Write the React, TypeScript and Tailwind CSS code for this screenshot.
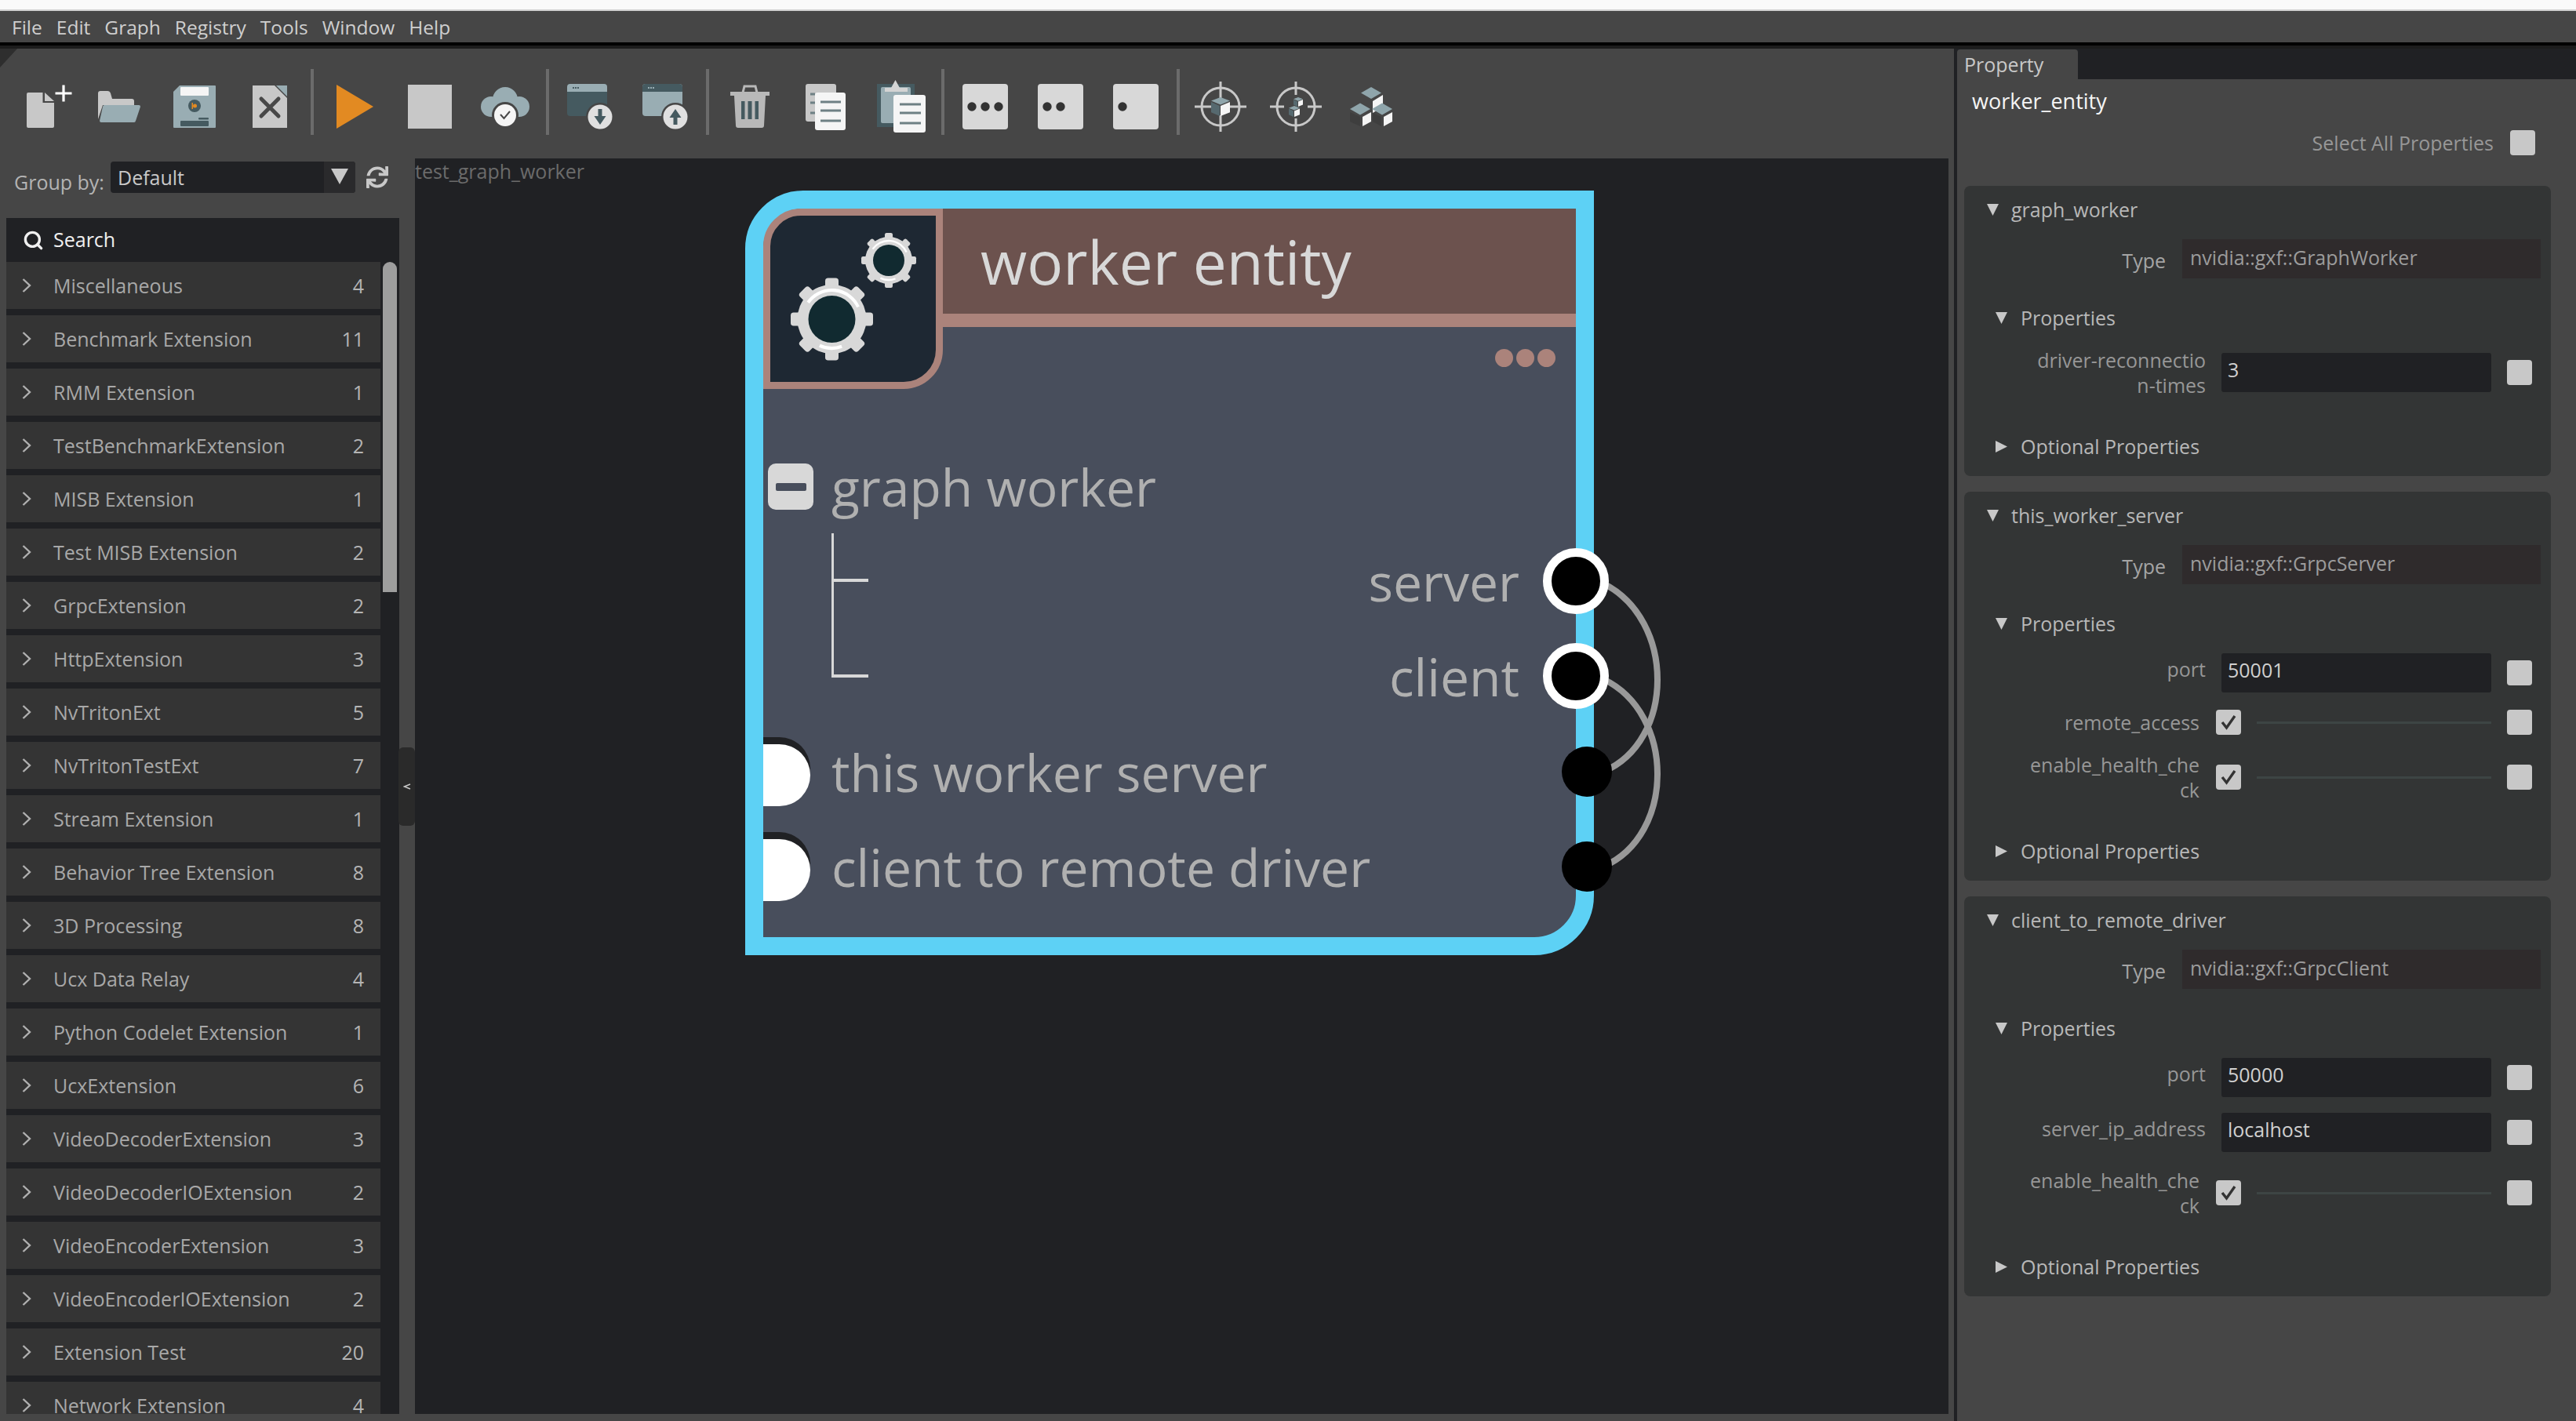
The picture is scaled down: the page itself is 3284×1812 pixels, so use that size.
import { Search } from 'lucide-react';
import { FaSync } from 'react-icons/fa';
import type { ReactNode } from 'react';

const groups: [string, number][] = [
  ['Miscellaneous', 4],
  ['Benchmark Extension', 11],
  ['RMM Extension', 1],
  ['TestBenchmarkExtension', 2],
  ['MISB Extension', 1],
  ['Test MISB Extension', 2],
  ['GrpcExtension', 2],
  ['HttpExtension', 3],
  ['NvTritonExt', 5],
  ['NvTritonTestExt', 7],
  ['Stream Extension', 1],
  ['Behavior Tree Extension', 8],
  ['3D Processing', 8],
  ['Ucx Data Relay', 4],
  ['Python Codelet Extension', 1],
  ['UcxExtension', 6],
  ['VideoDecoderExtension', 3],
  ['VideoDecoderIOExtension', 2],
  ['VideoEncoderExtension', 3],
  ['VideoEncoderIOExtension', 2],
  ['Extension Test', 20],
  ['Network Extension', 4],
];

const menu = ['File', 'Edit', 'Graph', 'Registry', 'Tools', 'Window', 'Help'];

// toolbar icons are drawn in page coordinates, the viewBox picks the 96px cell
function Tool({ x, children }: { x: number; children: ReactNode }) {
  return (
    <svg viewBox={`${x} 88 96 96`} className="w-24 h-24 shrink-0 overflow-visible">
      {children}
    </svg>
  );
}

function Sep() {
  return (
    <div className="w-3 h-[84px] shrink-0 flex justify-center">
      <div className="w-1 h-full bg-[#6b6b6b]" />
    </div>
  );
}

function Cube({ cx, cy, s }: { cx: number; cy: number; s: number }) {
  return (
    <g>
      <polygon
        points={`${cx},${cy - s} ${cx + s},${cy - s * 0.62} ${cx},${cy - s * 0.2} ${cx - s},${cy - s * 0.62}`}
        fill="#8fa5ab"
      />
      <polygon
        points={`${cx - s},${cy - s * 0.5} ${cx - 1},${cy - s * 0.08} ${cx - 1},${cy + s} ${cx - s},${cy + s * 0.6}`}
        fill="#56696f"
      />
      <polygon
        points={`${cx + s},${cy - s * 0.5} ${cx},${cy - s * 0.08} ${cx},${cy + s} ${cx + s},${cy + s * 0.6}`}
        fill="#f5f5f5"
      />
    </g>
  );
}

function Target({ cx, gap, children }: { cx: number; gap: number; children: ReactNode }) {
  const cy = 136;
  return (
    <g stroke="#c8c8c8" strokeWidth="3" fill="none">
      <circle cx={cx} cy={cy} r="24" />
      <path d={`M${cx - 33} ${cy}H${cx - gap} M${cx + gap} ${cy}H${cx + 33} M${cx} ${cy - 32}V${cy - gap} M${cx} ${cy + gap}V${cy + 32}`} />
      <g stroke="none">{children}</g>
    </g>
  );
}

function Toolbar() {
  return (
    <div className="h-[140px] shrink-0 flex pl-2 pt-[26px] items-start">
      <Tool x={8}>
        <path d="M36 118H54.5V131H69V161q0 2-2 2H36q-2 0-2-2V120q0-2 2-2Z" fill="#c8c8c8" />
        <polygon points="57,118 69,129 57,129" fill="#c8c8c8" />
        <path d="M70.5 119H91.5M81 108.5V129.5" stroke="#fff" strokeWidth="3.2" />
      </Tool>
      <Tool x={104}>
        <path d="M125 152V119q0-3 3-3h9q3 0 4 3l2 7h25q3 0 3 3v5H131Z" fill="#c8c8c8" />
        <path d="M133 134H177q2 0 2 2l-6 18q-.5 2-2 2H129q-2 0-2-2l4-18q.5-2 2-2Z" fill="#99adb3" />
      </Tool>
      <Tool x={200}>
        <path d="M229 109H274q1 0 1 1V162q0 1-1 1H222q-1 0-1-1V117Z" fill="#99adb3" />
        <rect x="230" y="111" width="36" height="11" rx="1" fill="#f5f5f5" />
        <circle cx="248" cy="135" r="8" fill="#455a60" />
        <circle cx="248.5" cy="135" r="2.5" fill="#e28a22" />
        <rect x="244.5" y="131" width="1.5" height="8" fill="#e28a22" />
        <rect x="253" y="150" width="13" height="2.5" rx="1" fill="#455a60" />
        <rect x="230" y="154" width="36" height="7" rx="1" fill="#455a60" />
      </Tool>
      <Tool x={296}>
        <path d="M322 109H350L366 125V163H322Z" fill="#c8c8c8" />
        <polygon points="352,109 366,109 366,123" fill="#99adb3" />
        <path d="M333 126L355 148M355 126L333 148" stroke="#484848" strokeWidth="5" strokeLinecap="round" />
      </Tool>
      <Sep />
      <Tool x={404}>
        <polygon points="429,108 476,136 429,164" fill="#e28a22" />
      </Tool>
      <Tool x={500}>
        <rect x="520" y="108" width="56" height="56" fill="#c8c8c8" />
      </Tool>
      <Tool x={596}>
        <circle cx="644" cy="127" r="16" fill="#99adb3" />
        <circle cx="626" cy="136" r="13" fill="#99adb3" />
        <circle cx="662" cy="136" r="13" fill="#99adb3" />
        <rect x="626" y="130" width="36" height="19" fill="#99adb3" />
        <circle cx="644" cy="147" r="17" fill="#464646" />
        <circle cx="644" cy="147" r="14" fill="#f5f5f5" />
        <path d="M638 146L642.5 151L650 142" stroke="#484848" strokeWidth="2" fill="none" />
      </Tool>
      <Sep />
      <Tool x={704}>
        <rect x="723" y="107" width="51" height="41" rx="4" fill="#455a60" />
        <path d="M723 117V111q0-4 4-4h43q4 0 4 4v6Z" fill="#99adb3" />
        <path d="M730 112h8" stroke="#455a60" strokeWidth="2" strokeDasharray="2 1" />
        <circle cx="765" cy="149" r="18" fill="#464646" />
        <circle cx="765" cy="149" r="15.5" fill="#e0e0e0" />
        <path d="M762.5 139h5v9h5L765 159l-7.5-11h5Z" fill="#455a60" />
      </Tool>
      <Tool x={800}>
        <rect x="819" y="107" width="51" height="41" rx="4" fill="#99adb3" />
        <path d="M819 117V111q0-4 4-4h43q4 0 4 4v6Z" fill="#455a60" />
        <path d="M826 112h8" stroke="#99adb3" strokeWidth="2" strokeDasharray="2 1" />
        <circle cx="861" cy="149" r="18" fill="#464646" />
        <circle cx="861" cy="149" r="15.5" fill="#e0e0e0" />
        <path d="M858.5 159h5v-9h5L861 139l-7.5 11h5Z" fill="#455a60" />
      </Tool>
      <Sep />
      <Tool x={908}>
        <path d="M936 122H976L974 160q0 3-3 3H941q-3 0-3-3Z" fill="#b8b8b8" />
        <path d="M931 117H981V122H931Z" fill="#b8b8b8" />
        <path d="M947 118L949 110H963L965 118" stroke="#b8b8b8" strokeWidth="3" fill="none" />
        <rect x="945" y="129" width="4.5" height="23" fill="#455a60" />
        <rect x="953.5" y="129" width="5" height="23" fill="#455a60" />
        <rect x="962.5" y="129" width="4.5" height="23" fill="#455a60" />
      </Tool>
      <Tool x={1004}>
        <rect x="1027" y="107" width="39" height="48" rx="3" fill="#c8c8c8" />
        <path d="M1033 120h6M1033 131h6M1033 144h6" stroke="#6e8084" strokeWidth="3" />
        <rect x="1039" y="118" width="39" height="48" rx="3" fill="#f5f5f5" />
        <path d="M1046 130h26M1046 141h26M1046 154h26" stroke="#6e8084" strokeWidth="3" />
      </Tool>
      <Tool x={1100}>
        <rect x="1118" y="107" width="48" height="55" fill="#455a60" />
        <rect x="1123" y="111" width="38" height="46" rx="2" fill="#99adb3" />
        <path d="M1128 117V112H1136L1141.5 102L1147 112H1157V117Z" fill="#d4d4d4" />
        <rect x="1139" y="121" width="41" height="48" rx="3" fill="#f5f5f5" />
        <path d="M1147 133h27M1147 144h27M1147 157h27" stroke="#6e8084" strokeWidth="3" />
      </Tool>
      <Sep />
      <Tool x={1208}>
        <rect x="1227" y="107" width="58" height="58" rx="4" fill="#d8d8d8" />
        <circle cx="1239" cy="136" r="5.7" fill="#333" />
        <circle cx="1256" cy="136" r="5.7" fill="#333" />
        <circle cx="1273" cy="136" r="5.7" fill="#333" />
      </Tool>
      <Tool x={1304}>
        <rect x="1323" y="107" width="58" height="58" rx="4" fill="#d8d8d8" />
        <circle cx="1335" cy="136" r="5.7" fill="#333" />
        <circle cx="1352" cy="136" r="5.7" fill="#333" />
      </Tool>
      <Tool x={1400}>
        <rect x="1419" y="107" width="58" height="58" rx="4" fill="#d8d8d8" />
        <circle cx="1431" cy="136" r="5.7" fill="#333" />
      </Tool>
      <Sep />
      <Tool x={1508}>
        <Target cx={1556} gap={11}>
          <Cube cx={1556} cy={136} s={12} />
        </Target>
      </Tool>
      <Tool x={1604}>
        <Target cx={1652} gap={15}>
          <Cube cx={1655} cy={130} s={6} />
          <Cube cx={1650} cy={142} s={7} />
        </Target>
      </Tool>
      <Tool x={1700}>
        <polygon points="1748,111 1761,118.5 1748,126 1735,118.5" fill="#8fa5ab" />
        <polygon points="1763,121 1750,129 1750,144 1763,136" fill="#f5f5f5" />
        <polygon points="1734,131.5 1747,139 1734,146.5 1721,139" fill="#8fa5ab" />
        <polygon points="1762,131.5 1775,139 1762,146.5 1749,139" fill="#8fa5ab" />
        <polygon points="1748,143 1737,149 1737,161 1748,155" fill="#f5f5f5" />
        <polygon points="1775,143 1764,149 1764,161 1775,155" fill="#f5f5f5" />
        <polygon points="1734,149 1721,143 1721,155 1734,161" fill="#3e3e3e" />
        <polygon points="1761,149 1750,144 1750,155 1761,161" fill="#3e3e3e" />
      </Tool>
    </div>
  );
}

function GroupList() {
  return (
    <div className="w-[529px] shrink-0 flex flex-col relative">
      <div className="h-[76px] shrink-0 pl-[18px] flex items-start">
        <div className="text-[25px] leading-[32px] text-[#b4b4b4] mt-[14px] w-[123px]">Group by:</div>
        <div className="w-[312px] h-10 mt-1 rounded-[4px] bg-[#202124] flex items-center">
          <div className="flex-1 pl-[9px] text-[25px] leading-[32px] text-[#c8c8c8]">Default</div>
          <div className="w-10 h-10 bg-[#2a2a2c] rounded-r-[4px] flex items-center justify-center">
            <svg width="22" height="20" viewBox="0 0 22 20" className="-mt-[2px]">
              <polygon points="0,0 22,0 11,20" fill="#c8c8c8" />
            </svg>
          </div>
        </div>
        <FaSync className="ml-[14px] mt-[10px] text-[28px] text-[#c8c8c8]" />
      </div>
      <div className="ml-2 w-[501px] h-14 shrink-0 bg-[#202124] flex items-center pl-[21px]">
        <Search size={27} strokeWidth={3} className="text-[#f0f0f0]" />
        <span className="ml-[12px] text-[25px] leading-[32px] text-[#f0f0f0] -mt-[2px]">Search</span>
      </div>
      <div className="ml-2 w-[501px] flex-1 min-h-0 bg-[#202124] overflow-hidden relative">
        {groups.map(([name, count]) => (
          <div
            key={name}
            className="w-[477px] h-[60px] mb-2 bg-[#343434] flex items-center text-[25px] text-[#a8a8a8]"
          >
            <svg width="12" height="20" viewBox="0 0 12 20" className="ml-[20px] shrink-0">
              <path d="M1.5 2L10 10L1.5 18" stroke="#b0b0b0" strokeWidth="2.4" fill="none" />
            </svg>
            <span className="ml-[28px] flex-1 pt-px">{name}</span>
            <span className="mr-[21px] pt-px text-[#b4b4b4]">{count}</span>
          </div>
        ))}
        <div className="absolute left-[480px] top-0 w-[18px] h-[421px] rounded-t-[9px] bg-[#9e9e9e]" />
      </div>
      <div className="absolute left-[508px] top-[751px] w-[21px] h-[100px] rounded-[6px] bg-[#2a2a2a] flex items-center justify-center">
        <svg width="10" height="8" viewBox="0 0 10 8">
          <path d="M9 1L1.5 4L9 7" stroke="#c8c8c8" strokeWidth="1.4" fill="none" />
        </svg>
      </div>
    </div>
  );
}

function Gear({ cx, cy, r, hole, tooth }: { cx: number; cy: number; r: number; hole: number; tooth: number }) {
  const angles = [0, 45, 90, 135, 180, 225, 270, 315];
  const mid = (r + hole) / 2;
  const arc = (a: number, b: number) => {
    const p = (d: number) => {
      const t = (d * Math.PI) / 180;
      return `${cx + mid * Math.cos(t)} ${cy + mid * Math.sin(t)}`;
    };
    return `M${p(a)}A${mid} ${mid} 0 0 1 ${p(b)}`;
  };
  return (
    <g>
      {angles.map((a) => (
        <rect
          key={a}
          x={cx - tooth / 2}
          y={cy - r - tooth * 0.5}
          width={tooth}
          height={tooth}
          rx={tooth * 0.22}
          fill="#d8d8d8"
          transform={`rotate(${a} ${cx} ${cy})`}
        />
      ))}
      <circle cx={cx} cy={cy} r={r} fill="#d8d8d8" />
      <circle cx={cx} cy={cy} r={hole} fill="#112a30" />
      <path d={arc(215, 335)} stroke="#fff" strokeWidth={tooth * 0.24} fill="none" />
      <path d={arc(70, 115)} stroke="#fff" strokeWidth={tooth * 0.24} fill="none" />
    </g>
  );
}

function InputPort({ label }: { label: string }) {
  return (
    <div className="h-[79px] flex items-center">
      <div className="relative w-[60px] h-[79px]">
        <div className="absolute left-0 -top-[9px] w-[60px] h-[79px] rounded-r-[40px] bg-[#202124]" />
        <div className="absolute left-0 top-0 w-[60px] h-[79px] rounded-r-[40px] bg-white" />
      </div>
      <span className="ml-[27px] text-[66px] leading-[79px] text-[#b0b0b0] -mt-[9px]">{label}</span>
    </div>
  );
}

function Node() {
  return (
    <div className="absolute left-[421px] top-[41px] w-[1082px] h-[975px] border-[23px] border-[#5dd1f5] rounded-tl-[74px] rounded-br-[76px] bg-[#484e5c]">
      <div className="flex h-[230px]">
        <div className="w-[229px] h-[230px] shrink-0 border-[9px] border-[#ab837b] rounded-tl-[48px] rounded-br-[50px] bg-[#1e2833] overflow-hidden">
          <svg viewBox="982 275 211 212" className="w-[211px] h-[212px]">
            <Gear cx={1060.5} cy={407} r={44} hole={30} tooth={17} />
            <Gear cx={1133} cy={332} r={30} hole={20} tooth={10} />
          </svg>
        </div>
        <div className="flex-1 flex flex-col">
          <div className="h-[134px] bg-[#6c524e] pl-[48px] flex items-center text-[76.5px] leading-[100px] text-[#d8d8d8]">
            worker entity
          </div>
          <div className="h-[17px] bg-[#ab837b]" />
          <div className="flex justify-end gap-1 pr-[26px] pt-[28px]">
            <div className="w-[23px] h-[23px] rounded-full bg-[#ab837b]" />
            <div className="w-[23px] h-[23px] rounded-full bg-[#ab837b]" />
            <div className="w-[23px] h-[23px] rounded-full bg-[#ab837b]" />
          </div>
        </div>
      </div>

      <div className="mt-[95px] h-[59px] flex items-center">
        <div className="ml-[6px] w-[58px] h-[59px] rounded-[10px] bg-[#d8d8d8] flex items-center justify-center">
          <div className="w-[39px] h-[10px] rounded-[2px] bg-[#484e5c]" />
        </div>
        <span className="ml-[23px] text-[66px] leading-[59px] text-[#b0b0b0]">graph worker</span>
      </div>

      <div className="mt-[30px] flex items-start">
        <div className="ml-[87px] w-[47px] shrink-0">
          <div className="h-[62px] border-l-[3px] border-b-[4px] border-[#d8d8d8]" />
          <div className="h-[122px] border-l-[3px] border-b-[4px] border-[#d8d8d8]" />
        </div>
        <div className="flex-1 pr-[72px] pt-[31px] text-right text-[66px] leading-[60px] text-[#b0b0b0]">
          <div className="h-[60px]">server</div>
          <div className="h-[60px] mt-[61px]">client</div>
        </div>
      </div>

      <div className="mt-[57px]">
        <InputPort label="this worker server" />
      </div>
      <div className="mt-[42px]">
        <InputPort label="client to remote driver" />
      </div>

      <div className="absolute left-[994px] top-[433px] w-[84px] h-[84px] rounded-full bg-black border-[11px] border-white" />
      <div className="absolute left-[994px] top-[554px] w-[84px] h-[84px] rounded-full bg-black border-[11px] border-white" />
      <div className="absolute left-[1018px] top-[686px] w-16 h-16 rounded-full bg-black" />
      <div className="absolute left-[1018px] top-[807px] w-16 h-16 rounded-full bg-black" />
    </div>
  );
}

function Canvas() {
  return (
    <div className="w-[1955px] shrink-0 mb-[9px] bg-[#202124] relative">
      <div className="text-[25px] leading-[32px] text-[#6b6b6b]">test_graph_worker</div>
      <svg viewBox="2030 730 100 390" className="absolute left-[1501px] top-[528px] w-[100px] h-[390px]">
        <path d="M2044 744C2136 790 2136 945 2044 984" stroke="#999" strokeWidth="8" fill="none" />
        <path d="M2044 866C2136 910 2136 1065 2044 1105" stroke="#999" strokeWidth="8" fill="none" />
      </svg>
      <Node />
    </div>
  );
}

function Box({ checked }: { checked?: boolean }) {
  return (
    <div className="w-8 h-8 shrink-0 rounded-[4px] bg-[#c8c8c8] flex items-center justify-center">
      {checked && (
        <svg width="22" height="22" viewBox="0 0 22 22">
          <path d="M3 11L8.5 18L19 3" stroke="#333" strokeWidth="3.4" fill="none" />
        </svg>
      )}
    </div>
  );
}

function Down() {
  return (
    <svg width="15" height="15" viewBox="0 0 15 15" className="shrink-0">
      <polygon points="0,0 15,0 7.5,15" fill="#c8c8c8" />
    </svg>
  );
}

function Right() {
  return (
    <svg width="15" height="15" viewBox="0 0 15 15" className="shrink-0">
      <polygon points="0,0 15,7.5 0,15" fill="#c8c8c8" />
    </svg>
  );
}

function InputRow({ label, value, tall }: { label: ReactNode; value: string; tall?: boolean }) {
  return (
    <div className={tall ? 'flex items-center h-16' : 'flex items-center h-[50px]'}>
      <div className={tall ? 'w-[308px] text-right text-[#979797]' : 'w-[308px] text-right text-[#979797] pb-[10px]'}>{label}</div>
      <div className="ml-5 w-[344px] h-[50px] rounded-[3px] bg-[#202124] pl-2 pb-2 flex items-center text-[#d0d0d0]">{value}</div>
      <div className="ml-5">
        <Box />
      </div>
    </div>
  );
}

function CheckRow({ label, tall }: { label: ReactNode; tall?: boolean }) {
  return (
    <div className={tall ? 'flex items-center h-16' : 'flex items-center h-9'}>
      <div className="w-[300px] text-right text-[#979797]">{label}</div>
      <div className="ml-[21px]">
        <Box checked />
      </div>
      <div className="ml-5 w-[299px] h-[3px] bg-[#3d4544]" />
      <div className="ml-5">
        <Box />
      </div>
    </div>
  );
}

function Section({ title, type, children }: { title: string; type: string; children: ReactNode }) {
  return (
    <div className="ml-[9px] mr-[32px] mb-5 rounded-[8px] bg-[#333535] pb-[18px]">
      <div className="h-[60px] pl-[29px] flex items-center gap-4 text-[#b8b8b8]">
        <Down />
        <span>{title}</span>
      </div>
      <div className="mt-2 flex items-center h-[50px]">
        <div className="w-[257px] text-right text-[#a5a5a5] pt-1">Type</div>
        <div className="ml-[21px] w-[457px] h-[50px] bg-[#2f2b2c] pl-[10px] pb-1 flex items-center text-[#9c9c9c]">{type}</div>
      </div>
      <div className="mt-[30px] h-10 pl-10 flex items-center gap-[17px] text-[#b8b8b8]">
        <Down />
        <span>Properties</span>
      </div>
      <div className="mt-[18px] flex flex-col gap-5">{children}</div>
      <div className="mt-[42px] h-10 pl-10 flex items-center gap-[17px] text-[#b8b8b8]">
        <Right />
        <span>Optional Properties</span>
      </div>
    </div>
  );
}

function PropertyPanel() {
  return (
    <div className="flex-1 flex flex-col text-[25px] leading-[32px]">
      <div className="h-[39px] shrink-0 bg-[#202124] flex">
        <div className="w-[154px] mt-px rounded-t-[4px] bg-[#464646] pl-[9px] text-[#c8c8c8] flex items-center">Property</div>
      </div>
      <div className="pl-[19px] h-[58px] flex items-center text-[#f5f5f5] text-[27px] -mt-px">worker_entity</div>
      <div className="h-[48px] flex items-center justify-end pr-[52px] text-[#979797]">
        <span className="mr-[21px]">Select All Properties</span>
        <Box />
      </div>
      <div className="mt-[31px]">
        <Section title="graph_worker" type="nvidia::gxf::GraphWorker">
          <InputRow label={<>driver-reconnectio<br />n-times</>} value="3" tall />
        </Section>
        <Section title="this_worker_server" type="nvidia::gxf::GrpcServer">
          <InputRow label="port" value="50001" />
          <CheckRow label="remote_access" />
          <CheckRow label={<>enable_health_che<br />ck</>} tall />
        </Section>
        <Section title="client_to_remote_driver" type="nvidia::gxf::GrpcClient">
          <InputRow label="port" value="50000" />
          <InputRow label="server_ip_address" value="localhost" />
          <CheckRow label={<>enable_health_che<br />ck</>} tall />
        </Section>
      </div>
    </div>
  );
}

export default function App() {
  return (
    <div className="w-[3284px] h-[1812px] overflow-hidden flex flex-col bg-[#464646] font-['Open_Sans',sans-serif]">
      <div className="h-3 shrink-0 bg-[#fafafa]" />
      <div className="h-[2px] shrink-0 bg-[#d0d0d0]" />
      <div className="h-10 shrink-0 pl-[15px] pt-[2px] flex items-center gap-[18px] text-[24.5px] text-[#cfcfcf]">
        {menu.map((m) => (
          <span key={m}>{m}</span>
        ))}
      </div>
      <div className="h-1 shrink-0 bg-black" />
      <div className="h-1 shrink-0 bg-[#1c1c1c]" />
      <div className="flex-1 min-h-0 flex relative">
        <svg width="22" height="24" viewBox="0 0 22 24" className="absolute left-0 top-0">
          <polygon points="0,0 22,0 0,24" fill="#2e2e2e" />
        </svg>
        <div className="w-[2491px] shrink-0 flex flex-col">
          <Toolbar />
          <div className="flex-1 min-h-0 flex">
            <div className="flex pb-[9px] min-h-0">
              <GroupList />
            </div>
            <Canvas />
          </div>
        </div>
        <div className="w-1 shrink-0 bg-[#202124]" />
        <PropertyPanel />
      </div>
    </div>
  );
}
